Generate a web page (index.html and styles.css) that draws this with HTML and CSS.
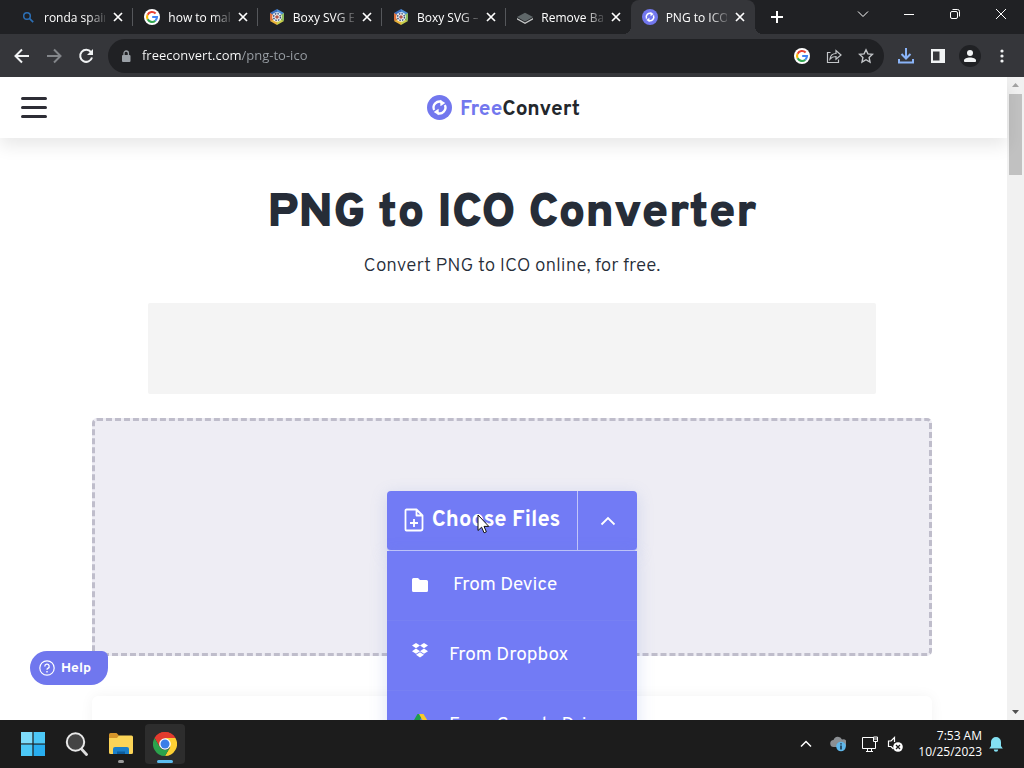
FILE: index.html
```html
<!DOCTYPE html>
<html lang="en">
<head>
  <meta charset="UTF-8">
  <meta name="viewport" content="width=device-width, initial-scale=1">
  <title>PNG to ICO Converter</title>
  <link rel="stylesheet" href="styles.css">
</head>
<body>
  <svg class="sprite" aria-hidden="true">
    <symbol id="i-x" viewBox="0 0 10 10"><path d="M1 1l8 8M9 1L1 9" stroke="currentColor" stroke-width="1.7"/></symbol>
    <symbol id="i-google" viewBox="0 0 16 16">
      <circle cx="8" cy="8" r="8" fill="#fff"/>
      <g fill="none" stroke-width="2.1">
        <path d="M11.6 4.5A5 5 0 0 0 3.6 5.7" stroke="#ea4335"/>
        <path d="M3.6 5.7a5 5 0 0 0 0 4.6" stroke="#fbbc05"/>
        <path d="M3.6 10.3a5 5 0 0 0 7.7 1.4" stroke="#34a853"/>
        <path d="M11.3 11.7A5 5 0 0 0 13 8H8.2" stroke="#4285f4"/>
      </g>
    </symbol>
    <symbol id="i-boxy" viewBox="0 0 16 16">
      <path d="M8 0l7 4v4H8z" fill="#4d8fd6"/>
      <path d="M8 0L1 4v4h7z" fill="#3a6fc0"/>
      <path d="M1 4v8l7-4z" fill="#e0723c"/>
      <path d="M1 12l7 4V8z" fill="#e9b23a"/>
      <path d="M15 12l-7 4V8z" fill="#c7cf4d"/>
      <path d="M15 4v8L8 8z" fill="#8dbd62"/>
      <circle cx="8" cy="8" r="4.8" fill="#f5f5f5"/>
      <circle cx="8" cy="8" r="3.4" fill="none" stroke="#35507a" stroke-width="1.4" stroke-dasharray="1.6 1.070"/>
      <circle cx="8" cy="8" r="1.8" fill="#b0574a"/>
    </symbol>
    <symbol id="i-convert" viewBox="0 0 26 26">
      <circle cx="13" cy="13" r="13" fill="#7277ee"/>
      <g fill="none" stroke="#fff" stroke-width="2.4">
        <path d="M7.4 15.6a6.2 6.2 0 0 1 8-8.3"/>
        <path d="M18.6 10.4a6.2 6.2 0 0 1-8 8.3"/>
      </g>
      <path d="M13.6 5l5.4 3.2-5 3.5z" fill="#fff"/>
      <path d="M12.400 21L7 17.800l5-3.500z" fill="#fff"/>
    </symbol>
  </svg>

  <div class="tabstrip">
    <div class="tabs">
      <div class="tab">
        <svg class="favicon" viewBox="0 0 16 16"><circle cx="7" cy="7" r="3.3" fill="none" stroke="#2c6fb5" stroke-width="1.5"/><path d="M9.4 9.4l3.8 3.8" stroke="#2c6fb5" stroke-width="1.7"/></svg>
        <span class="tab-title">ronda spain</span>
        <button class="tab-close" aria-label="Close tab"><svg><use href="#i-x"/></svg></button>
      </div>
      <div class="tab">
        <svg class="favicon"><use href="#i-google"/></svg>
        <span class="tab-title">how to make</span>
        <button class="tab-close" aria-label="Close tab"><svg><use href="#i-x"/></svg></button>
      </div>
      <div class="tab">
        <svg class="favicon"><use href="#i-boxy"/></svg>
        <span class="tab-title">Boxy SVG Editor</span>
        <button class="tab-close" aria-label="Close tab"><svg><use href="#i-x"/></svg></button>
      </div>
      <div class="tab">
        <svg class="favicon"><use href="#i-boxy"/></svg>
        <span class="tab-title">Boxy SVG –</span>
        <button class="tab-close" aria-label="Close tab"><svg><use href="#i-x"/></svg></button>
      </div>
      <div class="tab before-active">
        <svg class="favicon" viewBox="0 0 16 16"><path d="M0 9l8 4.6L16 9v1.4L8 15l-8-4.600z" fill="#c4c7c7"/><path d="M0 8l8-4.200L16 8l-8 4.400z" fill="#5f6769"/></svg>
        <span class="tab-title">Remove Back</span>
        <button class="tab-close" aria-label="Close tab"><svg><use href="#i-x"/></svg></button>
      </div>
      <div class="tab active">
        <svg class="favicon"><use href="#i-convert"/></svg>
        <span class="tab-title">PNG to ICO</span>
        <button class="tab-close" aria-label="Close tab"><svg><use href="#i-x"/></svg></button>
      </div>
    </div>
    <button class="new-tab" aria-label="New tab"><svg viewBox="0 0 12 12"><path d="M6 0v12M0 6h12" stroke="currentColor" stroke-width="2"/></svg></button>
    <div class="window-controls">
      <button aria-label="Search tabs"><svg viewBox="0 0 12 12"><path d="M1 3.500l5 5 5-5"/></svg></button>
      <button aria-label="Minimize"><svg viewBox="0 0 12 12"><path d="M1 6.500h10"/></svg></button>
      <button aria-label="Restore"><svg viewBox="0 0 12 12"><rect x="1.500" y="3.500" width="7" height="7" rx="1.500"/><path d="M3.500 1.500h5q2 0 2 2v5"/></svg></button>
      <button aria-label="Close"><svg viewBox="0 0 12 12"><path d="M1 1l10 10M11 1L1 11"/></svg></button>
    </div>
  </div>

  <div class="toolbar">
    <button class="tool" aria-label="Back"><svg viewBox="0 0 16 16"><path d="M15 8H2M8 1.500L1.500 8 8 14.500" fill="none" stroke="currentColor" stroke-width="2"/></svg></button>
    <button class="tool dim" aria-label="Forward"><svg viewBox="0 0 16 16"><path d="M1 8h13M8 1.500L14.500 8 8 14.500" fill="none" stroke="currentColor" stroke-width="2"/></svg></button>
    <button class="tool" aria-label="Reload"><svg viewBox="0 0 16 16"><path d="M13 4.200A6 6 0 1 0 14 9.500" fill="none" stroke="currentColor" stroke-width="2"/><path d="M15 1v6H9z" fill="currentColor"/></svg></button>
    <div class="omnibox">
      <svg class="lock" viewBox="0 0 10 12"><rect x="1" y="5" width="8.500" height="7" rx="1" fill="currentColor"/><path d="M3 5V3.200a2.200 2.200 0 0 1 4.400 0V5" fill="none" stroke="currentColor" stroke-width="1.300"/></svg>
      <input class="url" type="text" aria-label="Address" value="freeconvert.com/png-to-ico">
      <button class="tool" aria-label="Search with Google"><svg><use href="#i-google"/></svg></button>
      <button class="tool soft" aria-label="Share"><svg viewBox="0 0 16 16"><path d="M4.500 4.500h-3v10h11v-3M4 11c.5-4 3-5.500 6-5.500V2.500L15 7l-5 4.200V8.500C7.500 8.500 5.500 9.200 4 11z" fill="none" stroke="currentColor" stroke-width="1.200"/></svg></button>
      <button class="tool soft" aria-label="Bookmark"><svg viewBox="0 0 16 16"><path d="M8 1.800l1.900 4.100 4.500.5-3.300 3.100.9 4.500L8 11.700 4 14l.9-4.500L1.600 6.400l4.500-.5z" fill="none" stroke="currentColor" stroke-width="1.400"/></svg></button>
    </div>
    <button class="tool blue" aria-label="Downloads"><svg viewBox="0 0 16 16"><path d="M8 0v10M3.500 6L8 10.500 12.500 6M1 11v3.500h14V11" fill="none" stroke="currentColor" stroke-width="2"/></svg></button>
    <button class="tool" aria-label="Side panel"><svg viewBox="0 0 16 16"><path d="M1 1h14v14H1zM3 3.500v9h6.500v-9z" fill="currentColor" fill-rule="evenodd"/></svg></button>
    <button class="tool profile" aria-label="Profile"><svg viewBox="0 0 16 16"><circle cx="8" cy="5" r="3" fill="currentColor"/><path d="M2 14v-1.500C2 10.500 5 9.500 8 9.500s6 1 6 3V14z" fill="currentColor"/></svg></button>
    <button class="tool" aria-label="Menu"><svg viewBox="0 0 16 16" fill="currentColor"><circle cx="8" cy="3" r="1.600"/><circle cx="8" cy="8" r="1.600"/><circle cx="8" cy="13" r="1.600"/></svg></button>
  </div>

  <div class="viewport">
    <div class="page">
      <header class="site-header">
        <button class="hamburger" aria-label="Open menu"><span></span><span></span><span></span></button>
        <a class="logo" href="#"><svg><use href="#i-convert"/></svg><span><b>Free</b>Convert</span></a>
      </header>

      <main class="content">
        <h1>PNG to ICO Converter</h1>
        <p class="subtitle">Convert PNG to ICO online, for free.</p>
        <div class="banner"></div>
        <section class="dropzone">
          <div class="chooser">
            <div class="chooser-bar">
              <button class="choose">
                <svg viewBox="0 0 20 24"><path d="M2.500 1.500h10l6 6v13a2 2 0 0 1-2 2h-14a1 1 0 0 1-1-1v-19a1 1 0 0 1 1-1zM12.500 1.500v6h6M10 11v8M6 15h8" fill="none" stroke="currentColor" stroke-width="1.800" stroke-linejoin="round"/></svg>
                Choose Files
              </button>
              <button class="toggle" aria-label="More sources" aria-expanded="true"><svg viewBox="0 0 16 10"><path d="M1.500 8.500L8 2l6.500 6.500" fill="none" stroke="currentColor" stroke-width="1.800"/></svg></button>
            </div>
            <div class="sources">
              <button class="source device">
                <svg viewBox="0 0 18 18"><path d="M1 3.500q0-1.500 1.500-1.500H7l2 2h6.500Q17 4 17 5.500v9q0 1.500-1.500 1.500h-13Q1 16 1 14.500z" fill="#fff"/></svg>
                From Device
              </button>
              <button class="source">
                <svg class="lifted" viewBox="0 0 18 18" fill="#fff"><path d="M5 1L1 3.600l4 2.600 4-2.600zM13 1L9 3.600l4 2.600 4-2.600zM5 6.600L1 9.200l4 2.600 4-2.600zM13 6.600L9 9.200l4 2.600 4-2.600zM5 12.800l4 2.700 4-2.700-4-2.500z"/></svg>
                From Dropbox
              </button>
              <button class="source">
                <svg class="lifted" viewBox="0 0 18 18"><path d="M6.500 2h5L6 16l-5-4.500z" fill="#1f9d4d"/><path d="M8 2h4.500L18 11h-5z" fill="#f7c927"/><path d="M4 16l2.500-5H18l-3 5z" fill="#3b78e7"/></svg>
                From Google Drive
              </button>
            </div>
          </div>
        </section>
        <section class="info-card"></section>
      </main>
    </div>

    <div class="scrollbar" aria-hidden="true">
      <svg viewBox="0 0 17 17"><path d="M5 10l3.500-4 3.500 4z" fill="#a3a3a3"/></svg>
      <div class="thumb"></div>
      <svg viewBox="0 0 17 17"><path d="M5 7l3.500 4L12 7z" fill="#505050"/></svg>
    </div>

    <button class="help">
      <svg viewBox="0 0 16 16" fill="none" stroke="currentColor"><circle cx="8" cy="8" r="7.200" stroke-width="1.200"/><path d="M5.800 6.500A2.200 2.200 0 1 1 8.900 8.400Q8 8.900 8 9.800" stroke-width="1.300"/><path d="M8 11v1.500" stroke-width="1.400"/></svg>
      Help
    </button>
    <svg class="cursor" viewBox="0 0 13 20"><path d="M1 1v15.500l3.600-3.300 2.500 5.600 2.300-1-2.400-5.400h4.800z" fill="#fff" stroke="#111" stroke-linejoin="round"/></svg>
  </div>

  <footer class="taskbar">
    <div class="apps">
      <button class="app" aria-label="Start"><svg viewBox="0 0 24 24" fill="#4cc8f7"><path d="M0 0h11.400v11.400H0z" fill="#7edcfb"/><path d="M12.600 0H24v11.400H12.600zM0 12.600h11.400V24H0z"/><path d="M12.600 12.600H24V24H12.600z" fill="#28aef0"/></svg></button>
      <button class="app" aria-label="Search"><svg viewBox="0 0 24 24"><path d="M16 16.500l5.500 6" stroke="#ddd" stroke-width="2.800" stroke-linecap="round"/><circle cx="10.500" cy="10" r="8.700" fill="#444" stroke="#e8e8e8" stroke-width="2"/></svg></button>
      <button class="app open" aria-label="File Explorer"><svg viewBox="0 0 24 24"><path d="M0 2.500Q0 1 1.500 1h6L10 3.500V8H0z" fill="#d5952a"/><path d="M0 6h8l2-2.500h12.500Q24 3.500 24 5v15.500q0 1.500-1.500 1.500h-21Q0 22 0 20.500z" fill="#fbd457"/><path d="M4 22v-5q0-2 2-2h12q2 0 2 2v5z" fill="#1a7fc9"/><path d="M8 22v-2.500h8V22z" fill="#0c5c9c"/></svg></button>
      <button class="app open current" aria-label="Chrome"><svg viewBox="0 0 24 24"><path d="M12 12L1.600 6A12 12 0 0 1 22.400 6z" fill="#e33b2e"/><path d="M12 6h10.400A12 12 0 0 1 12 24l5.200-9z" fill="#fdd033"/><path d="M1.600 6A12 12 0 0 1 22.400 6H12l-5.200 9z" fill="#e33b2e"/><path d="M1.600 6l5.200 9a6 6 0 0 0 10.400 0L12 24A12 12 0 0 1 1.600 6z" fill="#2ba24c"/><circle cx="12" cy="12" r="5.800" fill="#fff"/><circle cx="12" cy="12" r="4.500" fill="#3c7ee8"/></svg></button>
    </div>
    <div class="tray">
      <button class="tray-button" aria-label="Hidden icons"><svg viewBox="0 0 16 16"><path d="M3 10.500l5-5 5 5" fill="none" stroke="#fff" stroke-width="1.500"/></svg></button>
      <button class="tray-button" aria-label="OneDrive"><svg viewBox="0 0 16 16"><path d="M4 11a3.500 3.500 0 0 1-.5-7A4.500 4.500 0 0 1 12 3.500 3.500 3.500 0 0 1 14 11z" fill="#8b8f93"/><circle cx="11" cy="10.500" r="4.800" fill="#5fb7ea"/><path d="M11 9.500v4M11 7.200v1.300" stroke="#123" stroke-width="1.400"/></svg></button>
      <button class="tray-button" aria-label="Network"><svg viewBox="0 0 16 16" fill="none" stroke="#fff"><path d="M11 1.500H.5v11h13V8M4 15.500h7M5.500 12.500v3M9.500 12.500v3M11.500 1h4v4.500h-4zM13.500 5.500V9M11.500 3h4"/></svg></button>
      <button class="tray-button narrow" aria-label="Volume muted"><svg viewBox="0 0 16 16"><path d="M7.500 6V1.500L4 5H1.500v5.500H4l2.500 2.500" fill="none" stroke="#fff" stroke-width="1.200"/><circle cx="11" cy="11" r="4.800" fill="#fff"/><path d="M9 9l4 4M13 9l-4 4" stroke="#1c1c1c" stroke-width="1.300"/></svg></button>
      <time class="clock" datetime="2023-10-25T07:53"><span>7:53 AM</span><span>10/25/2023</span></time>
      <button class="tray-button bell" aria-label="Notifications"><svg viewBox="0 0 16 16"><path d="M8 1a5 5 0 0 1 5 5v4l1.800 2.500H1.200L3 10V6a5 5 0 0 1 5-5zM5.800 13.500h4.400A2.200 2.200 0 0 1 5.800 13.500z" fill="#84e0f2"/></svg></button>
    </div>
  </footer>
</body>
</html>
```
FILE: styles.css
```css
:root {
  --violet: #727bf5;
  --ink: #262d38;
  --chrome-dark: #202124;
  --chrome-mid: #35363a;
}

* {
  box-sizing: border-box;
}

body {
  margin: 0;
  height: 100vh;
  display: grid;
  grid-template-rows: auto auto minmax(0, 1fr) auto;
  overflow: hidden;
  font-family: Overpass, "Roboto", sans-serif;
  color: var(--ink);
}

button {
  display: flex;
  align-items: center;
  justify-content: center;
  padding: 0;
  border: none;
  background: none;
  color: inherit;
  font: inherit;
  cursor: pointer;
}

svg {
  display: block;
  flex: none;
}

.sprite {
  position: absolute;
  width: 0;
  height: 0;
}

/* browser tabs */
.tabstrip {
  display: flex;
  height: 34px;
  padding-left: 9px;
  background: var(--chrome-dark);
  color: #fff;
  font: 12px "Open Sans", sans-serif;
}

.tabs {
  display: flex;
  flex: 0 1 746px;
  min-width: 0;
}

.tab {
  position: relative;
  display: flex;
  flex: 1 1 0;
  align-items: center;
  min-width: 0;
  padding: 0 10px 0 11px;
}

.tab::after {
  content: '';
  position: absolute;
  right: 0;
  top: 8px;
  width: 1px;
  height: 18px;
  background: #55575b;
}

.tab.before-active::after {
  display: none;
}

.favicon {
  width: 16px;
  height: 16px;
}

.tab-title {
  flex: 1;
  min-width: 0;
  margin: 0 8px;
  overflow: hidden;
  white-space: nowrap;
  mask-image: linear-gradient(to right, #000 70%, rgba(0, 0, 0, 0.2));
}

.tab-close svg {
  width: 10px;
  height: 10px;
}

.tab.active {
  background: var(--chrome-mid);
  border-radius: 8px 8px 0 0;
}

.tab.active::before,
.tab.active::after {
  content: '';
  position: absolute;
  top: auto;
  bottom: 0;
  width: 8px;
  height: 8px;
}

.tab.active::before {
  left: -8px;
  background: radial-gradient(circle at 0 0, transparent 8px, var(--chrome-mid) 8px);
}

.tab.active::after {
  right: -8px;
  background: radial-gradient(circle at 100% 0, transparent 8px, var(--chrome-mid) 8px);
}

.new-tab {
  width: 28px;
  margin-left: 8px;
}

.new-tab svg {
  width: 12px;
  height: 12px;
}

.window-controls {
  display: flex;
  height: 28px;
  margin-left: auto;
}

.window-controls button {
  width: 46px;
}

.window-controls svg {
  width: 12px;
  height: 12px;
  fill: none;
  stroke: #fff;
}

/* address bar */
.toolbar {
  display: flex;
  align-items: center;
  height: 43px;
  padding: 0 6px;
  background: var(--chrome-mid);
  color: #f1f3f4;
}

.tool {
  width: 32px;
  height: 32px;
  flex: none;
}

.tool svg {
  width: 16px;
  height: 16px;
}

.tool.dim {
  color: #83868a;
}

.tool.soft {
  color: #c3c6c9;
}

.tool.blue {
  color: #8ab4f8;
}

.profile svg {
  width: 22px;
  height: 22px;
  padding: 3px;
  border-radius: 50%;
  background: var(--chrome-dark);
}

.omnibox {
  display: flex;
  flex: 1;
  align-items: center;
  min-width: 0;
  height: 34px;
  margin: 0 6px;
  padding: 0 2px 0 13px;
  border-radius: 17px;
  background: var(--chrome-dark);
}

.lock {
  width: 10px;
  height: 12px;
  color: #9aa0a6;
}

.url {
  flex: 1;
  min-width: 0;
  height: 24px;
  margin-left: 11px;
  padding: 0 0 2px;
  border: none;
  outline: none;
  font: 13px "Open Sans", sans-serif;
  color: transparent;
  /* host is white, path is grey */
  background: linear-gradient(to right, #fff 100px, #9aa0a6 100px);
  background-clip: text;
  -webkit-background-clip: text;
}

/* web page */
.viewport {
  position: relative;
  display: flex;
  overflow: hidden;
  background: #fff;
}

.page {
  flex: 1;
  min-width: 0;
}

.site-header {
  position: relative;
  display: grid;
  grid-template-columns: 1fr auto 1fr;
  align-items: center;
  height: 61px;
  padding: 0 21px;
  background: #fff;
  box-shadow: 0 8px 16px rgba(0, 0, 0, 0.09);
}

.hamburger {
  flex-direction: column;
  gap: 6px;
  width: 26px;
}

.hamburger span {
  width: 26px;
  height: 3px;
  border-radius: 2px;
  background: #2d2d35;
}

.logo {
  display: flex;
  align-items: center;
  gap: 8px;
  color: #23272c;
  font-size: 21px;
  font-weight: 700;
  text-decoration: none;
}

.logo svg {
  width: 25px;
  height: 25px;
}

.logo span {
  padding-top: 4px;
}

.logo b {
  color: #7277ee;
  font-weight: 700;
}

.content {
  display: flex;
  flex-direction: column;
  align-items: center;
  padding: 48px 0 0 17px;
}

h1 {
  margin: 0;
  font-size: 48px;
  font-weight: 900;
  line-height: 56px;
}

.subtitle {
  margin: 10px 0 0;
  font-size: 19px;
  font-weight: 300;
  line-height: 28px;
}

.banner {
  width: 100%;
  max-width: 728px;
  height: 91px;
  margin-top: 23px;
  border-radius: 2px;
  background: #f4f4f4;
}

.dropzone {
  display: flex;
  justify-content: center;
  width: 100%;
  max-width: 840px;
  height: 238px;
  margin-top: 24px;
  padding-top: 70px;
  border: 3px dashed #bfbdcb;
  border-radius: 5px;
  background: #eeedf4;
}

.chooser {
  position: relative;
  z-index: 1;
  width: 250px;
  height: 60px;
  color: #fff;
}

.chooser-bar {
  display: flex;
  height: 60px;
  border-bottom: 1px solid #c2c6fa;
  border-radius: 4px;
  background: var(--violet);
  box-shadow: 0 4px 16px rgba(114, 140, 220, 0.25);
}

.choose {
  flex: 1;
  gap: 8px;
  padding-bottom: 1px;
  border-right: 1px solid #c2c6fa;
  font-size: 22px;
  font-weight: 700;
}

.choose svg {
  width: 20px;
  height: 24px;
}

.toggle {
  width: 59px;
}

.toggle svg {
  width: 16px;
  height: 10px;
}

.sources {
  position: absolute;
  top: 60px;
  left: 0;
  width: 100%;
  background: var(--violet);
  box-shadow: 0 4px 16px rgba(114, 140, 220, 0.25);
}

.source {
  justify-content: flex-start;
  gap: 20px;
  width: 100%;
  height: 70px;
  padding: 0 24px 2px;
  border-bottom: 1px solid #7780f3;
  font-size: 19px;
}

.source.device {
  gap: 24px;
}

.source svg {
  width: 18px;
  height: 18px;
}

.source .lifted {
  margin-bottom: 8px;
}

.info-card {
  width: 100%;
  max-width: 840px;
  height: 200px;
  margin-top: 40px;
  border-radius: 6px;
  background: #fff;
  box-shadow: 0 0 14px rgba(0, 0, 0, 0.05);
}

.scrollbar {
  display: flex;
  flex-direction: column;
  align-items: center;
  width: 17px;
  background: #f1f1f1;
}

.scrollbar svg {
  width: 17px;
  height: 17px;
}

.thumb {
  width: 13px;
  height: 81px;
  margin-bottom: auto;
  background: #c1c1c1;
}

.help {
  position: absolute;
  left: 30px;
  bottom: 35px;
  justify-content: flex-start;
  gap: 6px;
  width: 78px;
  height: 34px;
  padding-left: 9px;
  border-radius: 17px 6px 17px 17px;
  background: #7077ee;
  color: #fff;
  font-size: 14px;
  font-weight: 700;
}

.help svg {
  width: 16px;
  height: 16px;
}

.cursor {
  position: absolute;
  z-index: 2;
  left: 477px;
  top: 437px;
  width: 13px;
  height: 20px;
}

/* taskbar */
.taskbar {
  display: flex;
  justify-content: space-between;
  align-items: center;
  height: 48px;
  padding: 0 20px 0 13px;
  background: #1c1c1c;
  color: #fff;
}

.apps {
  display: flex;
  gap: 4px;
}

.app {
  position: relative;
  width: 40px;
  height: 40px;
  border-radius: 4px;
}

.app svg {
  width: 24px;
  height: 24px;
}

.app.current {
  background: #2d2d2d;
}

.app.open::after {
  content: '';
  position: absolute;
  bottom: 1px;
  left: 17px;
  width: 6px;
  height: 3px;
  border-radius: 2px;
  background: #9a9a9a;
}

.app.current::after {
  left: 12px;
  width: 16px;
  background: #5cbdf0;
}

.tray {
  display: flex;
  align-items: center;
}

.tray-button {
  width: 32px;
  height: 32px;
}

.tray-button.narrow {
  width: 18px;
}

.tray-button.bell {
  width: 16px;
  margin-left: 6px;
}

.tray-button svg {
  width: 16px;
  height: 16px;
}

.clock {
  display: flex;
  flex-direction: column;
  align-items: flex-end;
  margin-left: 14px;
  font: 12px/16px "Open Sans", sans-serif;
}
```
